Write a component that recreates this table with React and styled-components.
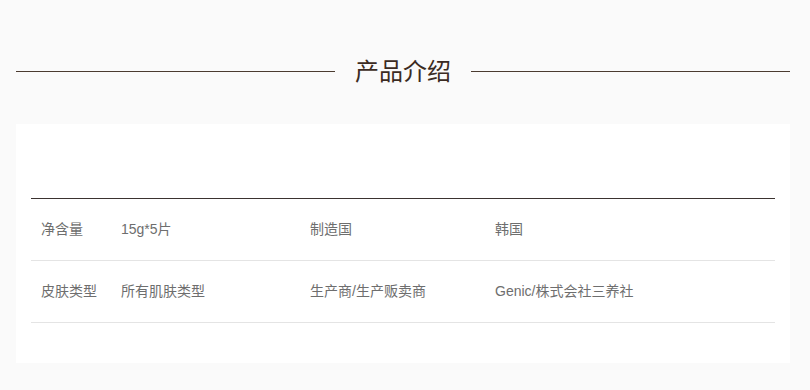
import React from "react";
import styled, { createGlobalStyle } from "styled-components";

const Global = createGlobalStyle`
  html, body {
    margin: 0;
    padding: 0;
    background: #fafafa;
    font-family: "Liberation Sans", "Noto Sans CJK SC", sans-serif;
  }
`;

const Page = styled.div`
  padding: 54px 20px 0 16px;
  width: 810px;
  box-sizing: border-box;
`;

const Heading = styled.div`
  display: flex;
  align-items: center;
  gap: 20px;
  height: 34px;
`;

const Rule = styled.div`
  flex: 1;
  height: 1px;
  background: #4b3b30;
`;

const Title = styled.h2`
  margin: -2px 0 0 0;
  font-size: 24px;
  font-weight: normal;
  line-height: 34px;
  color: #3b2b22;
  font-family: "Noto Sans CJK SC", sans-serif;
`;

const Card = styled.section`
  margin-top: 36px;
  background: #fff;
  padding: 74px 15px 40px 15px;
`;

const Table = styled.div`
  border-top: 1px solid #3b3330;
`;

const Row = styled.div`
  display: grid;
  grid-template-columns: 80px 189px 185px 1fr;
  height: 62px;
  box-sizing: border-box;
  padding-bottom: 2px;
  align-items: center;
  border-bottom: 1px solid #e4e4e4;
`;

const Cell = styled.div`
  padding-left: 10px;
  font-size: 14px;
  line-height: 20px;
  color: #6e6e6e;
  font-family: "Liberation Sans", "Noto Sans CJK SC", sans-serif;
`;

const rows = [
  ["净含量", "15g*5片", "制造国", "韩国"],
  ["皮肤类型", "所有肌肤类型", "生产商/生产贩卖商", "Genic/株式会社三养社"],
];

export default function App() {
  return (
    <>
      <Global />
      <Page>
        <Heading>
          <Rule />
          <Title>产品介绍</Title>
          <Rule />
        </Heading>
        <Card>
          <Table>
            {rows.map((r, i) => (
              <Row key={i}>
                {r.map((c, j) => (
                  <Cell key={j}>{c}</Cell>
                ))}
              </Row>
            ))}
          </Table>
        </Card>
      </Page>
    </>
  );
}
